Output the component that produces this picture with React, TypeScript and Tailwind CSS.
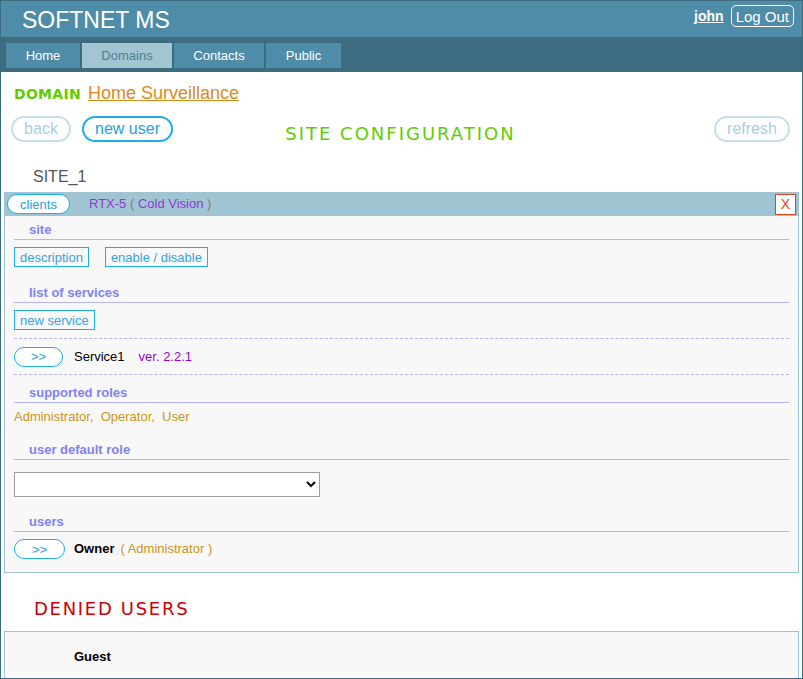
import React from "react";

const sans = "font-['Liberation_Sans',Arial,sans-serif]";
const verdana = "font-['DejaVu_Sans',Verdana,sans-serif]";

function SectionLabel({ children }: { children: React.ReactNode }) {
  return (
    <div className="border-b border-[#b4b4f8] pl-[15px] pb-[2px] text-[13px] font-bold leading-[15px] text-[#8282f0]">
      {children}
    </div>
  );
}

function PillButton({ children, className = "" }: { children: React.ReactNode; className?: string }) {
  return (
    <button
      className={
        "h-5 rounded-full border border-[#1eaee8] bg-white text-[13px] leading-none text-[#2a9fd6] " +
        className
      }
    >
      {children}
    </button>
  );
}

function BoxButton({ children }: { children: React.ReactNode }) {
  return (
    <button className="h-5 border border-[#1eaee8] px-[5px] text-[13px] leading-none text-[#3aa2da]">
      {children}
    </button>
  );
}

export default function App() {
  const tabs = [
    { label: "Home", w: "w-[74px]" },
    { label: "Domains", w: "w-[90px]", active: true },
    { label: "Contacts", w: "w-[90px]" },
    { label: "Public", w: "w-[75px]" },
  ];

  return (
    <div className={"w-[803px] h-[679px] overflow-hidden border border-[#3c6b80] bg-white " + sans}>
      {/* Header */}
      <div className="flex h-[36px] items-start justify-between bg-[#4f8ca7] pl-[21px] pr-[8px]">
        <div className="pt-[5px] text-[23px] leading-[28px] text-white">SOFTNET MS</div>
        <div className="flex items-center gap-[7px] pt-[4px]">
          <a href="#" className="text-[14px] font-bold text-white underline">
            john
          </a>
          <button className="h-[22px] rounded-[5px] border border-white px-[4px] text-[15px] leading-none text-white">
            Log Out
          </button>
        </div>
      </div>

      {/* Nav */}
      <div className="flex h-[35px] gap-[2px] bg-[#3d6b80] pl-[5px] pt-[6px]">
        {tabs.map((t) => (
          <div
            key={t.label}
            className={
              "flex h-[25px] items-center justify-center text-[13px] " +
              t.w +
              (t.active ? " bg-[#a2c5d3] text-[#4d7f96]" : " bg-[#4f8ca7] text-white")
            }
          >
            {t.label}
          </div>
        ))}
      </div>

      {/* Domain */}
      <div className="flex h-[24px] items-baseline gap-[7px] pl-[13px] pt-[8px]">
        <span className={"text-[14px] font-bold tracking-[0.3px] text-[#5fcc00] " + verdana}>DOMAIN</span>
        <a href="#" className="text-[18px] text-[#d98c1a] underline">
          Home Surveillance
        </a>
      </div>

      {/* Buttons row */}
      <div className="mt-[20px] grid h-[26px] grid-cols-[1fr_auto_1fr] items-start pl-[10px] pr-[12px]">
        <div className="flex gap-[11px]">
          <button className="h-[26px] w-[60px] rounded-full border-2 border-[#c4dfeb] text-[16px] leading-none text-[#a9cfe0]">
            back
          </button>
          <button className="h-[26px] w-[91px] rounded-full border-2 border-[#1eaee8] text-[16px] leading-none text-[#2a9fd6]">
            new user
          </button>
        </div>
        <div className={"pt-[7px] text-[18px] leading-[22px] tracking-[2px] text-[#5fcc00] " + verdana}>
          SITE CONFIGURATION
        </div>
        <div className="flex justify-end">
          <button className="h-[26px] w-[76px] rounded-full border-2 border-[#c4dfeb] text-[16px] leading-none text-[#a9cfe0]">
            refresh
          </button>
        </div>
      </div>

      {/* Site name */}
      <div className="mt-[26px] h-[24px] pl-[32px] text-[16px] leading-[18px] text-[#555]">SITE_1</div>

      {/* Site bar */}
      <div className="mx-[3px] flex h-[24px] items-center bg-[#a1c4d2] pl-[3px] pr-[3px]">
        <PillButton className="w-[63px]">clients</PillButton>
        <span className="ml-[19px] text-[13px] text-[#8e3ad6]">
          RTX-5 <span className="text-[#8a7a6a]">(</span> Cold Vision <span className="text-[#8a7a6a]">)</span>
        </span>
        <button className="ml-auto flex h-[21px] w-[21px] items-center justify-center border border-[#e0451a] bg-white text-[14px] leading-none text-[#e0451a]">
          X
        </button>
      </div>

      {/* Site panel */}
      <div className="mx-[3px] h-[357px] border border-t-0 border-[#a1c4d2] bg-[#f8f8f8] pl-[9px] pr-[9px] pt-[6px]">
        <SectionLabel>site</SectionLabel>
        <div className="mt-[7px] flex gap-[16px]">
          <BoxButton>description</BoxButton>
          <BoxButton>enable / disable</BoxButton>
        </div>

        <div className="mt-[18px]">
          <SectionLabel>list of services</SectionLabel>
        </div>
        <div className="mt-[7px] flex">
          <BoxButton>new service</BoxButton>
        </div>
        <div className="mt-[8px] border-t border-dashed border-[#b4b4f8]" />
        <div className="flex h-[35px] items-center">
          <PillButton className="w-[49px]">&gt;&gt;</PillButton>
          <span className="ml-[11px] text-[13px] text-black">Service1</span>
          <span className="ml-[14px] text-[13px] text-[#9900cc]">ver. 2.2.1</span>
        </div>
        <div className="border-t border-dashed border-[#b4b4f8]" />

        <div className="mt-[10px]">
          <SectionLabel>supported roles</SectionLabel>
        </div>
        <div className="mt-[5px] text-[13px] leading-[17px] text-[#cc9420]">
          Administrator,&nbsp; Operator,&nbsp; User
        </div>

        <div className="mt-[17px]">
          <SectionLabel>user default role</SectionLabel>
        </div>
        <div className="mt-[12px]">
          <select className="h-[25px] w-[306px] border border-[#a0a0a0] bg-white px-1 text-[14px]">
            <option></option>
          </select>
        </div>

        <div className="mt-[17px]">
          <SectionLabel>users</SectionLabel>
        </div>
        <div className="mt-[7px] flex h-[20px] items-center">
          <PillButton className="w-[51px]">&gt;&gt;</PillButton>
          <span className="ml-[9px] text-[13px] font-bold text-black">Owner</span>
          <span className="ml-[6px] text-[13px] text-[#cc9420]">( Administrator )</span>
        </div>
      </div>

      {/* Denied users */}
      <div className={"mt-[25px] h-[33px] pl-[33px] text-[18px] leading-[22px] tracking-[1.7px] text-[#cc0000] " + verdana}>
        DENIED USERS
      </div>
      <div className="mx-[3px] flex h-[60px] items-start border border-[#a1c4d2] bg-[#f8f8f8] pl-[69px] pt-[15px]">
        <span className="text-[13px] font-bold text-black">Guest</span>
      </div>
    </div>
  );
}
